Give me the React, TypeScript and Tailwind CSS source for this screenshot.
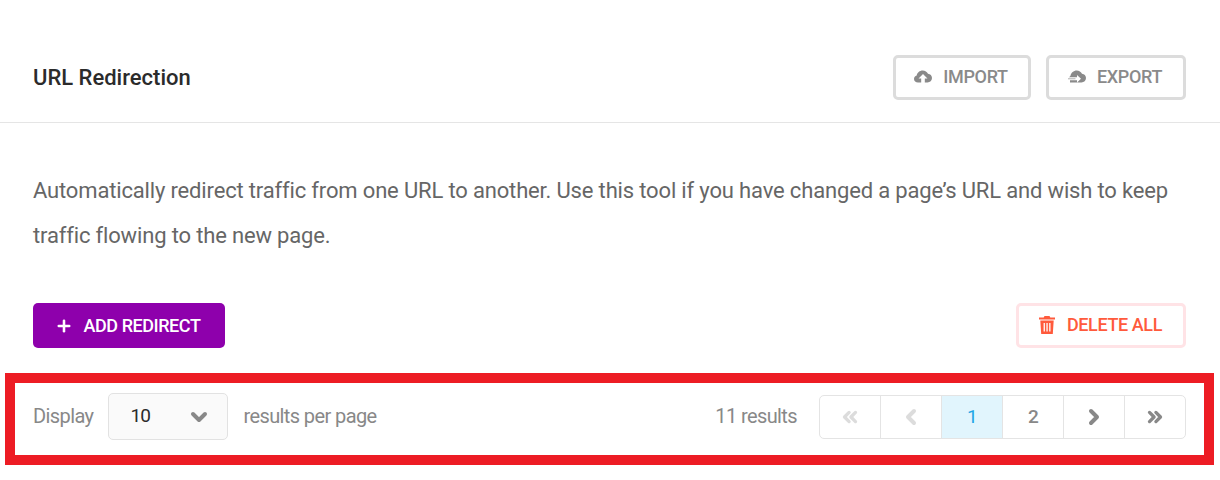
import React from "react";
import { ChevronDown, ChevronLeft, ChevronRight, ChevronsLeft, ChevronsRight, Plus } from "lucide-react";

const font = { fontFamily: "Roboto, sans-serif" };

function CloudUp() {
  return (
    <svg width="18" height="13" viewBox="0 0 18 13" fill="#8a8a8a">
      <path d="M4 12.5C1.8 12.5 0 11 0 9c0-1.7 1.1-3 2.7-3.400C3.200 2.700 5.600.5 8.700.5c2.400 0 4.400 1.300 5.300 3.300 2.300.2 4 2 4 4.300 0 2.500-2 4.400-4.500 4.400H4z" />
      <path d="M9 4l4.500 4.400h-2.700V13H7.200V8.400H4.500z" fill="#fff" />
    </svg>
  );
}

function CloudOut() {
  return (
    <svg width="18" height="13" viewBox="0 0 18 13" fill="#8a8a8a">
      <path d="M2.400 6C3 2.800 5.600.5 8.700.5c2.400 0 4.400 1.300 5.300 3.300 2.300.2 4 2 4 4.300 0 2.500-2 4.400-4.500 4.400H2V10.200h7v2.300L13 8.700 9 5v2.200H1z" />
      <path d="M0 8.500h7.500v.7H0z" />
    </svg>
  );
}

function Trash() {
  return (
    <svg width="16" height="18" viewBox="0 0 16 18" fill="#ff5a3c">
      <path d="M5.500 0h5l.8 1.600H16v2H0v-2h4.700z" />
      <path fillRule="evenodd" d="M1.300 4.500h13.400L13.800 18H2.200zM4.600 7v8.500h1.300V7zm2.800 0v8.500h1.300V7zm2.800 0v8.500h1.300V7z" />
    </svg>
  );
}

export default function App() {
  const cell = "flex-1 flex items-center justify-center border-r border-[#e4e4e4] text-[19px]";
  return (
    <div className="w-[1220px] h-[480px] bg-white overflow-hidden" style={font}>
      <div className="h-[123px] border-b border-[#e5e5e5] pl-[33px] pr-[34px] pt-[55px] flex justify-between items-start">
        <h1 className="text-[22px] leading-[45px] font-medium text-[#2b2b2b]">URL Redirection</h1>
        <div className="flex gap-[15px]">
          <button className="w-[138px] h-[45px] pb-[2px] pr-[2px] border-[3px] border-[#dcdcdc] rounded-[5px] flex items-center justify-center gap-[11px] text-[18px] font-medium text-[#8a8a8a] tracking-[-0.35px]">
            <CloudUp />
            IMPORT
          </button>
          <button className="w-[140px] h-[45px] pb-[2px] pr-[2px] border-[3px] border-[#dcdcdc] rounded-[5px] flex items-center justify-center gap-[11px] text-[18px] font-medium text-[#8a8a8a] tracking-[-0.35px]">
            <CloudOut />
            EXPORT
          </button>
        </div>
      </div>

      <p className="pl-[33px] pr-[34px] pt-[45px] text-[22px] leading-[45px] text-[#666666] h-[180px] tracking-[-0.16px]">
        Automatically redirect traffic from one URL to another. Use this tool if you have changed a page’s URL and wish to keep traffic flowing to the new page.
      </p>

      <div className="pl-[33px] pr-[34px] flex justify-between">
        <button className="w-[192px] h-[45px] pr-[3px] bg-[#8e00ac] rounded-[5px] flex items-center justify-center gap-[11px] text-white text-[18px] font-medium tracking-[-0.45px]">
          <Plus size={18} strokeWidth={3.4} />
          ADD REDIRECT
        </button>
        <button className="w-[170px] h-[45px] pb-[2px] pr-[1px] border-[3px] border-[#ffe3e6] rounded-[5px] flex items-center justify-center gap-[12px] text-[#ff5a3c] text-[18px] font-medium tracking-[-0.4px]">
          <Trash />
          DELETE ALL
        </button>
      </div>

      <div className="mt-[25px] ml-[5px] w-[1209px] h-[92px] border-[10px] border-[#ed1c24] pl-[18px] pr-[18px] pb-[4px] flex items-center justify-between text-[20px] tracking-[-0.6px] text-[#888888]">
        <div className="flex items-center">
          <span className="mb-[2px]">Display</span>
          <div className="ml-[15px] mb-[1px] w-[120px] h-[47px] rounded-[5px] border border-[#e2e2e2] bg-[#fafafa] flex items-center justify-between pl-[21px] pr-[16px] text-[#2b2b2b] text-[19px] tracking-[-0.8px]">
            <span>10</span>
            <ChevronDown size={24} strokeWidth={4} color="#888888" />
          </div>
          <span className="ml-[15px] mb-[2px]">results per page</span>
        </div>
        <div className="flex items-center">
          <span className="mr-[22px] mb-[2px]">11 results</span>
          <div className="w-[367px] h-[44px] rounded-[5px] border border-[#e4e4e4] flex overflow-hidden">
            <div className={cell}><ChevronsLeft size={22} strokeWidth={3.6} color="#dcdcdc" /></div>
            <div className={cell}><ChevronLeft size={24} strokeWidth={4} color="#dcdcdc" /></div>
            <div className={`${cell} bg-[#e1f5fd] text-[#1ea7e6]`}>1</div>
            <div className={`${cell} text-[#888888] font-medium`}>2</div>
            <div className={cell}><ChevronRight size={24} strokeWidth={4} color="#888888" /></div>
            <div className="flex-1 flex items-center justify-center"><ChevronsRight size={22} strokeWidth={3.6} color="#888888" /></div>
          </div>
        </div>
      </div>
    </div>
  );
}
